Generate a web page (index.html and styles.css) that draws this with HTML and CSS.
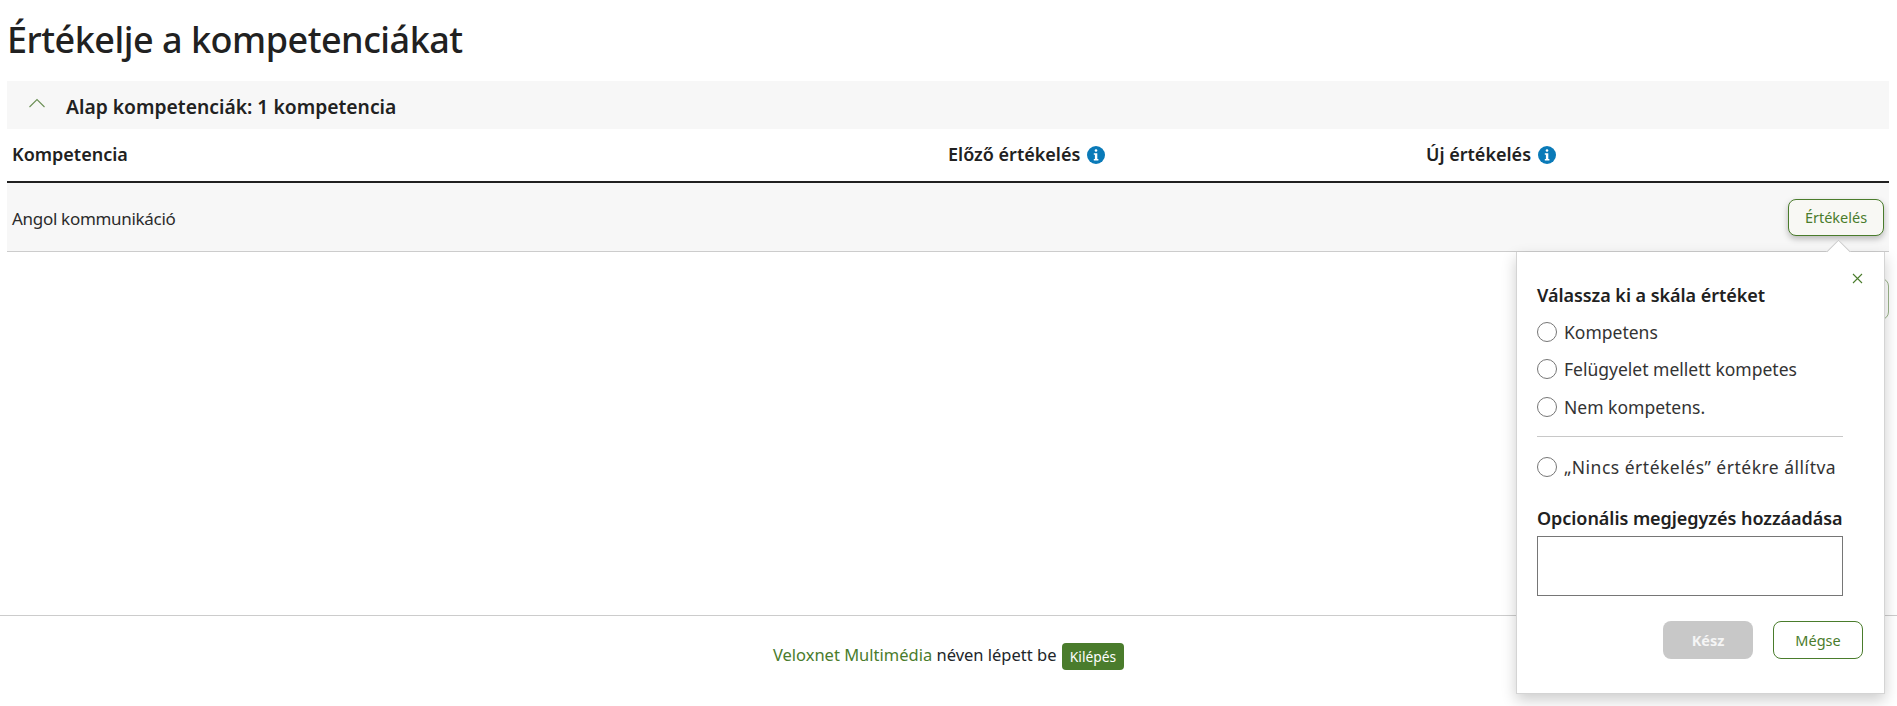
FILE: index.html
```html
<!DOCTYPE html>
<html lang="hu">
  <head>
    <meta charset="UTF-8" />
    <meta name="viewport" content="width=device-width, initial-scale=1.0" />
    <title>Kompetenciák értékelése</title>
    <link rel="stylesheet" href="styles.css">
  </head>
  <body>
    <main class="tartalom">
      <h1>Értékelje a kompetenciákat</h1>

      <section class="szekcio">
        <svg class="nyil" width="18" height="10" viewBox="0 0 18 10" aria-hidden="true">
          <path d="M1.5 9 L9 1.5 L16.5 9" fill="none" stroke="#6b8f55" stroke-width="1.1" />
        </svg>
        <h2>Alap kompetenciák: 1 kompetencia</h2>
      </section>

      <div class="fejlec">
        <div class="oszlop_nev">Kompetencia</div>
        <div class="oszlop_elozo">
          Előző értékelés
          <svg class="info" width="18" height="18" viewBox="0 0 18 18" aria-hidden="true">
            <circle cx="9" cy="9" r="9" fill="#0a7ab8" />
            <rect x="7.7" y="3.2" width="2.6" height="2.6" rx="1.3" fill="#fff" />
            <path d="M6.8 7.2 H10.3 V12.9 H11.4 V14.4 H6.8 V12.9 H7.9 V8.7 H6.8 Z" fill="#fff" />
          </svg>
        </div>
        <div class="oszlop_uj">
          Új értékelés
          <svg class="info" width="18" height="18" viewBox="0 0 18 18" aria-hidden="true">
            <circle cx="9" cy="9" r="9" fill="#0a7ab8" />
            <rect x="7.7" y="3.2" width="2.6" height="2.6" rx="1.3" fill="#fff" />
            <path d="M6.8 7.2 H10.3 V12.9 H11.4 V14.4 H6.8 V12.9 H7.9 V8.7 H6.8 Z" fill="#fff" />
          </svg>
        </div>
      </div>

      <div class="sor">
        <div>Angol kommunikáció</div>
        <button class="ertekeles">Értékelés</button>
      </div>

      <div class="rejtett_gomb"></div>

      <section class="popup">
        <div class="popup_nyil"></div>
        <svg class="bezar" width="11" height="11" viewBox="0 0 11 11" aria-hidden="true">
          <path d="M1 1 L10 10 M10 1 L1 10" stroke="#4a7c2c" stroke-width="1.1" fill="none" />
        </svg>
        <h3>Válassza ki a skála értéket</h3>
        <label class="valasztas"><span class="radio"></span>Kompetens</label>
        <label class="valasztas"><span class="radio"></span>Felügyelet mellett kompetes</label>
        <label class="valasztas"><span class="radio"></span>Nem kompetens.</label>
        <hr />
        <label class="valasztas nincs"><span class="radio"></span>„Nincs értékelés” értékre állítva</label>
        <h3 class="megjegyzes">Opcionális megjegyzés hozzáadása</h3>
        <div class="szovegdoboz"></div>
        <div class="gombok">
          <button class="kesz">Kész</button>
          <button class="megse">Mégse</button>
        </div>
      </section>
    </main>

    <footer>
      <a href="#">Veloxnet Multimédia</a> néven lépett be
      <span class="kilepes">Kilépés</span>
    </footer>
  </body>
</html>
```

FILE: styles.css
```css
* {
  box-sizing: border-box;
}
html,
body {
  height: 706px;
  overflow: hidden;
}
body {
  margin: 0;
  background-color: white;
  color: #212121;
  font-family: "Noto Sans", "Open Sans", sans-serif;
}
.tartalom {
  position: relative;
  height: 615px;
  padding: 0 8px 0 7px;
}
h1 {
  margin: 0;
  height: 81px;
  padding-top: 13px;
  font-size: 36px;
  line-height: 54px;
  font-weight: 500;
  letter-spacing: -0.5px;
}

/*szekcio*/
.szekcio {
  display: flex;
  align-items: center;
  height: 48px;
  padding-left: 21px;
  background-color: #f7f7f7;
}
.szekcio h2 {
  margin: 2px 0 0 20px;
  font-size: 19.3px;
  font-weight: 600;
}
.nyil {
  margin-bottom: 4px;
}

/*tabel*/
.fejlec {
  display: grid;
  grid-template-columns: 936px 478px 1fr;
  align-items: center;
  height: 54px;
  padding: 0 0 2px 5px;
  border-bottom: 2px solid #212121;
  font-size: 18px;
  font-weight: 600;
}
.info {
  vertical-align: -3px;
  margin-left: 2px;
}
.sor {
  display: flex;
  justify-content: space-between;
  align-items: center;
  height: 69px;
  padding: 2px 5px 0;
  background-color: #f7f7f7;
  border-bottom: 1px solid #cccccc;
  font-size: 17px;
  letter-spacing: -0.3px;
  color: #2b2b2b;
}
.ertekeles {
  width: 96px;
  height: 37px;
  padding: 0;
  margin-top: -2px;
  background-color: #f8f8f4;
  border: 1px solid #4a7c2c;
  border-radius: 8px;
  box-shadow: 0 3px 6px rgba(0, 0, 0, 0.25);
  color: #4a7c2c;
  font-family: inherit;
  font-size: 14.5px;
}
.rejtett_gomb {
  position: absolute;
  top: 278px;
  right: 8px;
  width: 96px;
  height: 42px;
  border: 1px solid #9bb58a;
  border-radius: 8px;
}

/*popup*/
.popup {
  position: absolute;
  top: 252px;
  left: 1516px;
  width: 369px;
  height: 442px;
  padding: 31px 20px 0;
  background-color: white;
  border: 1px solid #d4d4d4;
  border-top: none;
  box-shadow: 0 6px 14px rgba(0, 0, 0, 0.2);
}
.popup_nyil {
  position: absolute;
  top: -9px;
  left: 313px;
  width: 17px;
  height: 17px;
  background-color: white;
  border-top: 1px solid #cccccc;
  border-left: 1px solid #cccccc;
  transform: rotate(45deg);
}
.bezar {
  position: absolute;
  top: 21px;
  right: 21px;
}
.popup h3 {
  margin: 0;
  font-size: 18px;
  line-height: 25px;
  font-weight: 600;
  letter-spacing: -0.05px;
}
.valasztas {
  display: flex;
  align-items: center;
  height: 37.5px;
  font-size: 17.5px;
  color: #333333;
}
.nincs {
  letter-spacing: 0.5px;
}
.radio {
  width: 20px;
  height: 20px;
  margin-right: 7px;
  border: 1px solid #767676;
  border-radius: 50%;
}
.popup h3 + .valasztas {
  margin-top: 5px;
}
hr {
  width: 306px;
  margin: 10px 0 12px;
  border: none;
  border-top: 1px solid #c8c8c8;
}
.popup .megjegyzes {
  margin-top: 20px;
  white-space: nowrap;
}
.szovegdoboz {
  width: 306px;
  height: 60px;
  margin-top: 5px;
  border: 1px solid #767676;
}
.gombok {
  display: flex;
  justify-content: flex-end;
  gap: 20px;
  width: 326px;
  margin-top: 25px;
}
.gombok button {
  width: 90px;
  height: 38px;
  padding: 0;
  border-radius: 8px;
  font-family: inherit;
  font-size: 14.5px;
}
.kesz {
  background-color: #c8c8c8;
  border: none;
  color: #f5f5f5;
  font-weight: 700;
}
.megse {
  background-color: white;
  border: 1px solid #4a7c2c;
  color: #4a7c2c;
}

/*footer*/
footer {
  height: 91px;
  padding-top: 27px;
  border-top: 1px solid #cccccc;
  text-align: center;
  font-size: 16.5px;
  line-height: 24px;
  color: #212529;
}
footer a {
  color: #4a7c2c;
  text-decoration: none;
}
.kilepes {
  display: inline-block;
  margin-left: 1px;
  padding: 4px 8px;
  background-color: #4a7c2c;
  border-radius: 4px;
  color: white;
  font-size: 13.8px;
  line-height: 19px;
  vertical-align: -1px;
}
```
